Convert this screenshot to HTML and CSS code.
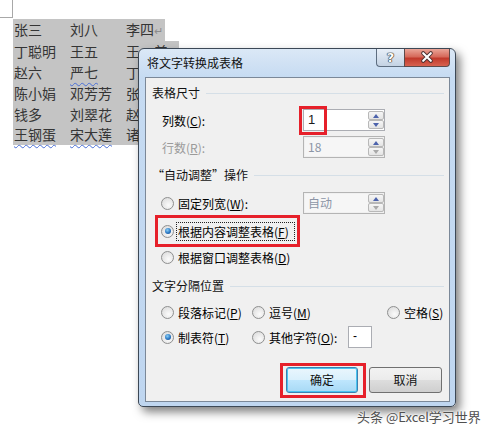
FILE: index.html
```html
<!DOCTYPE html>
<html>
<head>
<meta charset="utf-8">
<link rel="stylesheet" href="styles.css">
</head>
<body>
<div class="corner"></div>
<div class="doc">
  <div class="row"><span class="c">张三</span><span class="c">刘八</span><span class="c">李四<span class="pm">↵</span></span></div>
  <div class="row"><span class="c">丁聪明</span><span class="c">王五</span><span class="c">王一美<span class="pm">↵</span></span></div>
  <div class="row wide"><span class="c">赵六</span><span class="c"><span class="sp">严七</span></span><span class="c">丁</span></div>
  <div class="row wide"><span class="c">陈小娟</span><span class="c">邓芳芳</span><span class="c">张</span></div>
  <div class="row wide"><span class="c">钱多</span><span class="c">刘翠花</span><span class="c">赵</span></div>
  <div class="row wide"><span class="c"><span class="sp">王钢蛋</span></span><span class="c"><span class="sp">宋大莲</span></span><span class="c">诸</span></div>
</div>

<div class="dialog">
  <div class="titlebar">
    <span class="title">将文字转换成表格</span>
    <div class="tbtns">
      <span class="help">?</span>
      <span class="close"><svg width="46" height="18" viewBox="0 0 46 18"><path d="M19 5 L27 13 M27 5 L19 13" stroke="#4a3030" stroke-width="4.2" stroke-linecap="round"/><path d="M19 5 L27 13 M27 5 L19 13" stroke="#ffffff" stroke-width="2.2" stroke-linecap="round"/></svg></span>
    </div>
  </div>
  <div class="panel">
    <div class="grp">表格尺寸</div>
    <div class="field f1">
      <span class="lbl">列数(<u>C</u>):</span>
      <div class="spin">
        <span class="val">1</span>
        <span class="arrows"><span class="ab up"></span><span class="ab down"></span></span>
        <span class="redbox rb1"></span>
      </div>
    </div>
    <div class="field f2 dis">
      <span class="lbl">行数(<u>R</u>):</span>
      <div class="spin off">
        <span class="val">18</span>
        <span class="arrows"><span class="ab up"></span><span class="ab down grey"></span></span>
      </div>
    </div>

    <div class="grp g2">“自动调整”操作</div>
    <div class="opt o1">
      <span class="radio"></span><span class="rl w125">固定列宽(<u>W</u>):</span>
      <div class="spin off">
        <span class="val">自动</span>
        <span class="arrows"><span class="ab up"></span><span class="ab down grey"></span></span>
      </div>
    </div>
    <div class="opt o2">
      <span class="radio on"></span><span class="rl focus">根据内容调整表格(<u>F</u>)</span>
      <span class="redbox rb2"></span>
    </div>
    <div class="opt o3">
      <span class="radio"></span><span class="rl">根据窗口调整表格(<u>D</u>)</span>
    </div>

    <div class="grp g3">文字分隔位置</div>
    <div class="opt s1">
      <div class="cell cA"><span class="radio"></span><span class="rl">段落标记(<u>P</u>)</span></div>
      <div class="cell cB"><span class="radio"></span><span class="rl">逗号(<u>M</u>)</span></div>
      <div class="cell"><span class="radio"></span><span class="rl">空格(<u>S</u>)</span></div>
    </div>
    <div class="opt s2">
      <div class="cell cA"><span class="radio on"></span><span class="rl">制表符(<u>T</u>)</span></div>
      <div class="cell cB"><span class="radio"></span><span class="rl w83">其他字符(<u>O</u>):</span><span class="chr">-</span></div>
    </div>

    <div class="btns">
      <span class="btn def">确定<span class="redbox rb3"></span></span>
      <span class="btn">取消</span>
    </div>
  </div>
</div>

<div class="wm">头条 @Excel学习世界</div>
</body>
</html>
```
FILE: styles.css
```css
html, body {
  margin: 0;
  padding: 0;
}
body {
  width: 493px;
  height: 434px;
  overflow: hidden;
  position: relative;
  background: #ffffff;
  font-family: "Noto Sans CJK SC", "Noto Sans", sans-serif;
}

.corner {
  width: 12px;
  height: 17px;
  border-right: 1px solid #a8a8a8;
  border-bottom: 1px solid #a8a8a8;
}

.doc {
  margin-top: 1px;
  margin-left: 13px;
  font-size: 14px;
  line-height: 20.67px;
  color: #353535;
}
.row {
  display: flex;
  width: fit-content;
  background: #c4c4c4;
  padding-left: 1px;
}
.row.wide {
  padding-right: 40px;
}
.c {
  width: 56px;
  white-space: nowrap;
}
.c:last-child {
  width: auto;
}
.pm {
  display: inline-block;
  width: 11px;
  color: #8c8c8c;
  font-size: 11px;
}
.sp {
  text-decoration: underline wavy #4a6fd6;
  text-decoration-thickness: 1px;
  text-underline-offset: 4px;
}

/* dialog */
.dialog {
  position: absolute;
  left: 138px;
  top: 48px;
  width: 318px;
  height: 359px;
  box-sizing: border-box;
  border: 1px solid #3c4856;
  border-radius: 6px 6px 5px 5px;
  background: linear-gradient(#dbe8f6, #c6dbf2 28px, #bfd6f0);
  box-shadow: 4px 5px 10px rgba(0, 0, 0, 0.5);
  display: flex;
  flex-direction: column;
  font-size: 12px;
  color: #000;
}
.titlebar {
  height: 28px;
  display: flex;
  align-items: flex-start;
  padding: 0 5px 0 8px;
  flex: none;
}
.title {
  line-height: 27px;
  font-size: 12px;
  color: #111;
}
.tbtns {
  margin-left: auto;
  display: flex;
}
.help {
  width: 28px;
  height: 18px;
  box-sizing: border-box;
  border: 1px solid #5d6d80;
  border-top: none;
  border-right: none;
  border-radius: 0 0 0 4px;
  background: linear-gradient(#e8eff8, #d6e1ee 50%, #c4d2e3);
  text-align: center;
  font: bold 13px/17px "DejaVu Sans", sans-serif;
  color: #fff;
  text-shadow: 0 0 1px #333, 0 0 1px #333, 0 0 1px #333, 0 0 1px #333;
}
.close {
  width: 46px;
  height: 18px;
  box-sizing: border-box;
  border: 1px solid #5d4a4a;
  border-top: none;
  border-radius: 0 0 4px 0;
  background: linear-gradient(#eaa598, #d66a5b 45%, #c13a2c 55%, #d7614f);
  display: flex;
  align-items: center;
  justify-content: center;
  overflow: hidden;
}
.close svg {
  display: block;
  margin-top: -1px;
}

.panel {
  flex: 1;
  margin: 0 5px 4px 6px;
  border: 1px solid #7b8898;
  background: #f0f0f0;
  padding: 7px 5px 0 6px;
  display: flex;
  flex-direction: column;
}

.grp {
  display: flex;
  align-items: center;
  height: 16px;
  line-height: 16px;
  gap: 6px;
  color: #111;
}
.grp::after {
  content: "";
  flex: 1;
  height: 1px;
  background: #d5dfe7;
}
.g2 { margin-top: 9px; }
.g3 { margin-top: 11px; }

.field {
  display: flex;
  align-items: center;
  height: 22px;
  padding-left: 10px;
}
.f1 { margin-top: 8px; }
.f2 { margin-top: 5px; }
.lbl { width: 141px; }
.dis .lbl { color: #9a9a9a; }

u { text-decoration: underline; text-underline-offset: 1px; }

.spin {
  position: relative;
  width: 82px;
  height: 22px;
  box-sizing: border-box;
  border: 1px solid #abadb3;
  background: #fff;
  display: flex;
  padding: 1px 0 1px 1px;
}
.spin.off {
  border-color: #b4b4b4;
  background: #f0f0f0;
}
.spin.off .val {
  background: #f6f6f6;
  color: #8c95a6;
}
.val {
  flex: 1;
  padding-left: 3px;
  line-height: 18px;
  font-size: 13px;
  font-family: "Liberation Sans", "Noto Sans CJK SC", sans-serif;
  color: #1a1a1a;
}
.spin.off .val { font-family: "Noto Sans CJK SC", sans-serif; font-size: 12px; }
.arrows {
  display: flex;
  flex-direction: column;
  width: 16px;
}
.ab {
  height: 9px;
  box-sizing: border-box;
  border: 1px solid #b8b8b8;
  border-radius: 2px;
  background: linear-gradient(#f6f6f6, #e4e4e4);
  display: flex;
  align-items: center;
  justify-content: center;
}
.ab::before {
  content: "";
  width: 0;
  height: 0;
  border-left: 3.5px solid transparent;
  border-right: 3.5px solid transparent;
}
.up::before { border-bottom: 4px solid #4d63ac; }
.down::before { border-top: 4px solid #4d63ac; }
.down.grey::before { border-top-color: #a9a9a9; }

.opt {
  display: flex;
  align-items: center;
  height: 20px;
  position: relative;
}
.o1 { margin-top: 9px; height: 22px; }
.o2 { margin-top: 7px; }
.o3 { margin-top: 6px; }
.s1 { margin-top: 8px; }
.s2 { margin-top: 4px; height: 22px; }

.radio {
  flex: none;
  position: relative;
  width: 13px;
  height: 13px;
  box-sizing: border-box;
  border-radius: 50%;
  border: 1px solid #8e8f8f;
  background: radial-gradient(circle at 60% 65%, #fbfbfb, #e0e0e0 75%, #cfcfcf);
  margin-left: 9px;
}
.radio.on::after {
  content: "";
  position: absolute;
  left: 2.5px;
  top: 2.5px;
  width: 6px;
  height: 6px;
  border-radius: 50%;
  background: radial-gradient(circle at 40% 35%, #8cd0f6, #2a78c4 55%, #123f7a);
}
.rl {
  margin-left: 4px;
  line-height: 17px;
  white-space: nowrap;
}
.w125 { width: 125px; flex: none; }
.w83 { width: 79px; flex: none; }
.rl.focus {
  margin-left: 2px;
  padding: 0 5px 0 1px;
  border: 1px dotted #222;
}

.cell {
  display: flex;
  align-items: center;
}
.cA { width: 91px; }
.cB { width: 135px; }

.chr {
  width: 24px;
  height: 22px;
  box-sizing: border-box;
  border: 1px solid #abadb3;
  background: #fff;
  line-height: 18px;
  padding-left: 4px;
  font-family: "Liberation Sans", sans-serif;
  font-size: 12px;
}

.btns {
  margin-top: 19px;
  display: flex;
  justify-content: flex-end;
  gap: 11px;
  padding-right: 2px;
}
.btn {
  position: relative;
  width: 73px;
  height: 26px;
  box-sizing: border-box;
  border: 1px solid #707070;
  border-radius: 3px;
  background: linear-gradient(#f2f2f2, #ebebeb 50%, #dddddd 51%, #cfcfcf);
  text-align: center;
  line-height: 24px;
  color: #111;
}
.btn.def {
  width: 72px;
  border-color: #3c7fb1;
  box-shadow: inset 0 0 0 1px #4ac4f0;
  background: linear-gradient(#eaf6fd, #d9f0fc 50%, #bee6fd 51%, #a7d9f5);
}

.redbox {
  position: absolute;
  box-sizing: border-box;
  border: 3px solid #e6202a;
  z-index: 5;
}
.rb1 { left: -5px; top: -4px; width: 28px; height: 29px; }
.rb2 { left: 3px; top: -6px; width: 145px; height: 32px; }
.rb3 { left: -7px; top: -5px; width: 86px; height: 35px; }

.wm {
  position: absolute;
  left: 357px;
  top: 408px;
  font-size: 13px;
  line-height: 18px;
  color: #505050;
  text-shadow: 0 0 2px #fff, 0 0 2px #fff;
  white-space: nowrap;
}
```
